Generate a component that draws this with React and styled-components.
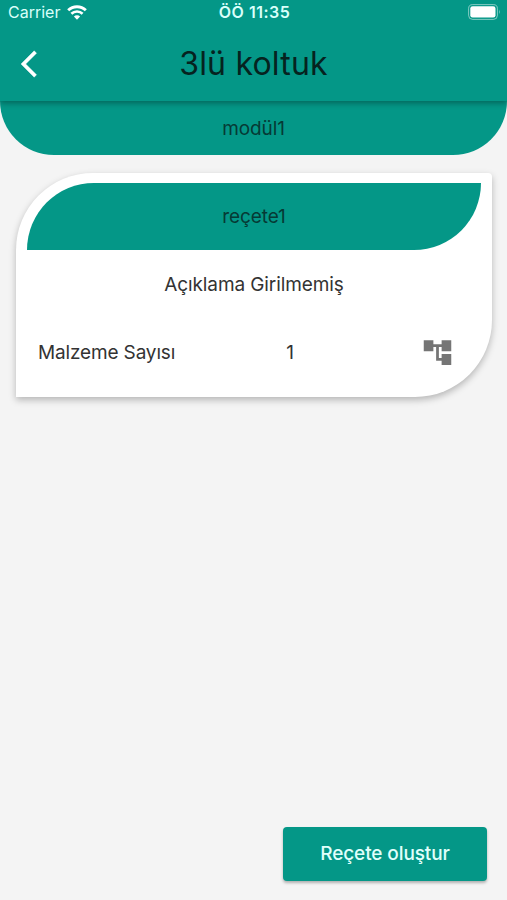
import styled, { createGlobalStyle } from "styled-components";
import { MdAccountTree, MdArrowBackIos } from "react-icons/md";

const recipes = [
  { name: "reçete1", description: "Açıklama Girilmemiş", materialCount: 1 },
];

export default function App() {
  return (
    <Screen>
      <GlobalStyle />
      <Header>
        <StatusBar>
          <Carrier>
            <span>Carrier</span>
            <WifiIcon />
          </Carrier>
          <Clock>ÖÖ 11:35</Clock>
          <BatteryIcon />
        </StatusBar>
        <AppBar>
          <BackButton aria-label="Geri">
            <MdArrowBackIos size={32} />
          </BackButton>
          <Title>3lü koltuk</Title>
        </AppBar>
      </Header>
      <ModuleBar>modül1</ModuleBar>
      <RecipeList>
        {recipes.map((recipe) => (
          <RecipeCard key={recipe.name}>
            <RecipeName>{recipe.name}</RecipeName>
            <Description>{recipe.description}</Description>
            <MaterialRow>
              <MaterialLabel>Malzeme Sayısı</MaterialLabel>
              <MaterialCount>{recipe.materialCount}</MaterialCount>
              <TreeButton aria-label="Malzemeler">
                <MdAccountTree size={33} />
              </TreeButton>
            </MaterialRow>
          </RecipeCard>
        ))}
      </RecipeList>
      <Footer>
        <CreateButton>Reçete oluştur</CreateButton>
      </Footer>
    </Screen>
  );
}

function WifiIcon() {
  return (
    <svg width="20" height="15" viewBox="0 0 20 15" fill="none">
      <path d="M1.2 5.3a12.6 12.6 0 0 1 17.6 0" stroke="#fff" strokeWidth="2.9" />
      <path d="M4.4 8.8a8 8 0 0 1 11.2 0" stroke="#fff" strokeWidth="2.6" />
      <path d="M6.9 11.5a4.4 4.4 0 0 1 6.2 0L10 14.7z" fill="#fff" />
    </svg>
  );
}

function BatteryIcon() {
  return (
    <svg width="33" height="16" viewBox="0 0 33 16" fill="none">
      <rect x="0.6" y="0.6" width="28.8" height="14.8" rx="4" stroke="#fff" strokeOpacity="0.5" />
      <rect x="2.3" y="2.3" width="25.2" height="11.2" rx="2.3" fill="#fff" />
      <path d="M31 5.5q1.6 2.4 0 4.8z" fill="#fff" fillOpacity="0.5" />
    </svg>
  );
}

const GlobalStyle = createGlobalStyle`
  * {
    box-sizing: border-box;
  }
  body {
    margin: 0;
    font-family: Inter, "Liberation Sans", sans-serif;
    font-size: 19px;
    letter-spacing: -0.1px;
    color: #333;
  }
  button {
    font: inherit;
    letter-spacing: inherit;
    border: 0;
    padding: 0;
    background: none;
  }
  svg {
    display: block;
  }
`;
const Screen = styled.div`
  display: flex;
  flex-direction: column;
  width: 507px;
  height: 900px;
  overflow: hidden;
  background: #f4f4f4;
`;
const Header = styled.header`
  position: relative;
  z-index: 1;
  height: 101px;
  background: #049787;
  box-shadow: 0 2px 6px rgba(0, 0, 0, 0.35);
`;
const StatusBar = styled.div`
  display: grid;
  grid-template-columns: 1fr auto 1fr;
  align-items: center;
  height: 24px;
  padding: 0 6px 0 8px;
  font-size: 16px;
  color: #d9fffa;

  > :last-child {
    justify-self: end;
  }
`;
const Carrier = styled.div`
  display: flex;
  align-items: center;
  gap: 7px;
  letter-spacing: 0;
`;
const Clock = styled.span`
  font-weight: 600;
  letter-spacing: 0.5px;
`;
const AppBar = styled.div`
  display: grid;
  grid-template-columns: 60px 1fr 60px;
  align-items: center;
  height: 79px;
`;
const BackButton = styled.button`
  padding-left: 21px;
  color: #fff;

  path:not([fill="none"]) {
    stroke: #fff;
    stroke-width: 0.3;
  }
  path[fill="none"] {
    stroke: none;
  }
`;
const Title = styled.h1`
  margin: 0;
  text-align: center;
  font-size: 32px;
  font-weight: 400;
  letter-spacing: 0.2px;
  color: #06231f;
`;
const ModuleBar = styled.div`
  display: flex;
  align-items: center;
  justify-content: center;
  height: 54px;
  border-radius: 0 0 54px 54px;
  background: #049787;
  color: #063a35;
`;
const RecipeList = styled.main`
  flex: 1;
  padding: 18px 15px 0 16px;
`;
const RecipeCard = styled.article`
  height: 224px;
  padding: 10px 11px;
  border-radius: 77px 4px 77px 0;
  background: #fff;
  box-shadow: 0 3px 7px rgba(0, 0, 0, 0.26);
`;
const RecipeName = styled.div`
  display: flex;
  align-items: center;
  justify-content: center;
  height: 67px;
  border-radius: 67px 0 67px 0;
  background: #049787;
  color: #063a35;
`;
const Description = styled.p`
  margin: 0;
  line-height: 69px;
  text-align: center;
`;
const MaterialRow = styled.div`
  display: grid;
  grid-template-columns: 177px 150px 1fr;
  align-items: center;
  height: 67px;
  padding-left: 11px;
`;
const MaterialLabel = styled.span`
  letter-spacing: -0.15px;
`;
const MaterialCount = styled.span`
  text-align: center;
`;
const TreeButton = styled.button`
  justify-self: end;
  margin-right: 27px;
  color: #757575;
`;
const Footer = styled.footer`
  display: flex;
  justify-content: flex-end;
  padding: 0 20px 19px;
`;
const CreateButton = styled.button`
  && {
    width: 204px;
    height: 54px;
    padding-bottom: 2px;
    border-radius: 4px;
    background: #049787;
    box-shadow: 0 2px 3px rgba(0, 0, 0, 0.28);
    color: #e0fffb;
    font-weight: 500;
  }
`;
